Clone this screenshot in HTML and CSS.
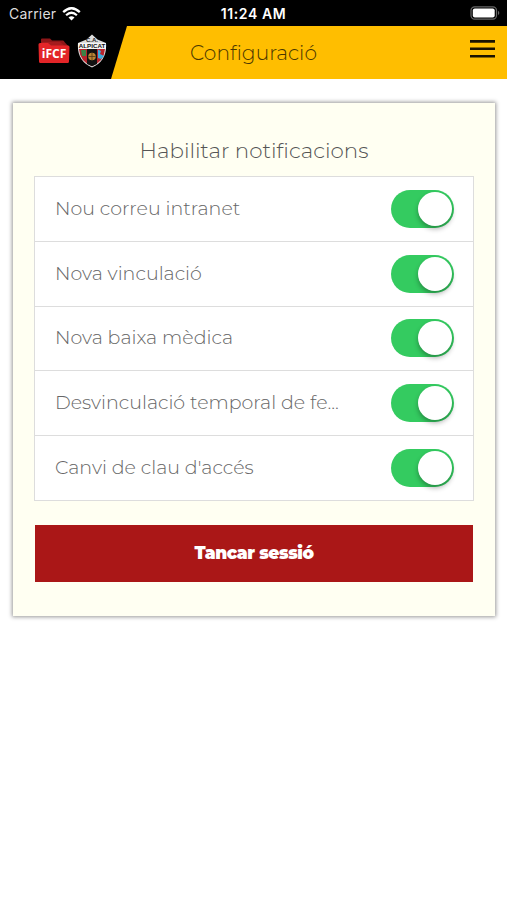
FILE: index.html
```html
<!DOCTYPE html>
<html lang="ca">
<head>
  <meta charset="UTF-8">
  <meta name="viewport" content="width=device-width, initial-scale=1.0">
  <title>Configuració</title>
  <link rel="stylesheet" href="styles.css">
</head>
<body>
  <div class="status-bar">
    <div class="carrier">
      <span>Carrier</span>
      <svg class="wifi" width="19" height="14" viewBox="0 0 19 14">
        <path d="M1.2 5.2 Q9.5 -2.8 17.8 5.2" fill="none" stroke="#fff" stroke-width="2.3"/>
        <path d="M4.1 8.3 Q9.5 3.2 14.9 8.3" fill="none" stroke="#fff" stroke-width="2.2"/>
        <path d="M6.5 10.5 Q9.5 8 12.5 10.5 L9.5 13.6 Z" fill="#fff"/>
      </svg>
    </div>
    <div class="clock">11:24 AM</div>
    <div class="battery">
      <svg width="31" height="14" viewBox="0 0 31 14">
        <rect x="1" y="0.8" width="25.5" height="12.4" rx="3.6" fill="none" stroke="#666" stroke-width="1.2"/>
        <rect x="2.8" y="2.6" width="21.9" height="8.8" rx="2" fill="#fff"/>
        <path d="M28 4.8 Q30.6 7 28 9.2 Z" fill="#666"/>
      </svg>
    </div>
  </div>

  <header class="navbar">
    <div class="logos">
      <svg width="32" height="26" viewBox="0 0 32 26">
        <path d="M3 9 V1.5 Q3 0.5 4 0.5 H12 L14 2.5 H25 Q26 2.5 26.5 4 L31 9 Z" fill="#8e1618"/>
        <path d="M4 4 H22 L27 8 H4 Z" fill="#a51b1d"/>
        <path d="M0.5 6.5 Q0.5 5 2 5 H10 L13 7.5 H30 Q31.5 7.5 31.5 9 L31 23.5 Q31 25 29.5 25 H2.5 Q1 25 1 23.5 Z" fill="#e32528"/>
        <text class="ifcf" x="16" y="20.2" text-anchor="middle">iFCF</text>
      </svg>
      <svg width="30" height="34" viewBox="0 0 30 34">
        <path d="M15 0.5 L20.5 5.5 L29 9 Q30.5 27 15 33.5 Q-0.5 27 1 9 L9.5 5.5 Z" fill="#ddd"/>
        <path d="M2 15 H28 Q27 27.5 15 32.3 Q3 27.5 2 15 Z" fill="#b8232c"/>
        <path d="M10 15 H20 V30 L15 32.3 L10 30 Z" fill="#111"/>
        <path d="M4 16 H9 V22 H5 Z" fill="#3c8245"/>
        <path d="M21 15.5 L24 17 L23 20 L27 22 L24 25 L21 24 Z" fill="#3badde"/>
        <circle cx="15" cy="22.5" r="3.8" fill="#b98432"/>
        <path d="M15 18.8 V26.2 M11.3 22.5 H18.7" stroke="#513716" stroke-width="0.8"/>
        <path d="M1 9 H29 V15 H1 Z" fill="#f5f5f5"/>
        <text class="crest-top" x="15" y="8.2" text-anchor="middle">C.A.</text>
        <text class="crest-name" x="15" y="14.3" text-anchor="middle">ALPICAT</text>
      </svg>
    </div>
    <h1>Configuració</h1>
    <svg class="menu" width="25" height="20" viewBox="0 0 25 20">
      <path d="M0 2.4 H25 M0 9.8 H25 M0 17.2 H25" stroke="#1b1300" stroke-width="2.6"/>
    </svg>
  </header>

  <main class="card">
    <h2>Habilitar notificacions</h2>
    <ul class="options">
      <li><span class="label">Nou correu intranet</span><span class="switch"></span></li>
      <li><span class="label">Nova vinculació</span><span class="switch"></span></li>
      <li><span class="label">Nova baixa mèdica</span><span class="switch"></span></li>
      <li><span class="label">Desvinculació temporal de fe...</span><span class="switch"></span></li>
      <li><span class="label">Canvi de clau d'accés</span><span class="switch"></span></li>
    </ul>
    <button class="logout">Tancar sessió</button>
  </main>
</body>
</html>
```

FILE: styles.css
```css
* {
  box-sizing: border-box;
}
body {
  margin: 0;
  min-height: 100vh;
  background: #fff;
  font-family: Montserrat, Inter, sans-serif;
  font-weight: 300;
}
.status-bar {
  display: grid;
  grid-template-columns: 1fr auto 1fr;
  align-items: center;
  height: 26px;
  padding: 1px 6px 0 9px;
  background: #000;
  color: #fff;
  font-family: Inter, sans-serif;
  font-size: 14px;
}
.carrier {
  display: flex;
  align-items: center;
  gap: 6px;
  font-weight: 400;
  color: #ddd;
  letter-spacing: 0.2px;
}
.clock {
  margin-left: -3px;
  font-weight: 600;
  letter-spacing: 0.6px;
}
.battery {
  display: flex;
  justify-content: flex-end;
}
.battery svg {
  margin-top: -1px;
}
.navbar {
  display: grid;
  grid-template-columns: 127px 1fr 127px;
  align-items: center;
  height: 53px;
  background: #ffbe00;
}
.logos {
  display: flex;
  align-items: center;
  gap: 7px;
  height: 53px;
  padding: 0 0 3px 38px;
  background: #000;
  clip-path: polygon(0 0, 100% 0, 111px 100%, 0 100%);
}
.ifcf {
  font: 700 12px "Open Sans", sans-serif;
  fill: #fff;
}
.crest-top {
  font: 700 6px "Liberation Sans", sans-serif;
  fill: #222;
}
.crest-name {
  font: 700 6.2px "Liberation Sans", sans-serif;
  fill: #111;
}
h1 {
  margin: 0;
  color: #4a3700;
  font-size: 20.2px;
  font-weight: 300;
  text-align: center;
}
.menu {
  justify-self: end;
  margin: 0 12px 7px 0;
}
.card {
  width: 482px;
  height: 513px;
  margin: 24px 0 0 13px;
  padding: 33px 21px 0 21px;
  background: #fffff2;
  box-shadow: 0 0 4px 1px #999;
}
h2 {
  margin: 0 0 11px;
  color: #555;
  font-size: 21.4px;
  font-weight: 300;
  line-height: 29px;
  text-align: center;
}
.options {
  margin: 0;
  padding: 0;
  list-style: none;
  background: #fff;
  border: 1px solid #ddd;
  border-bottom: none;
}
.options li {
  display: flex;
  align-items: center;
  justify-content: space-between;
  height: 64.8px;
  padding: 0 19px 0 20px;
  border-bottom: 1px solid #ddd;
  color: #666;
  font-size: 19px;
}
.label {
  margin-top: -1px;
  white-space: nowrap;
}
.switch {
  display: flex;
  align-items: center;
  justify-content: flex-end;
  width: 63px;
  height: 38px;
  padding-right: 2px;
  border-radius: 19px;
  background: #34cb60;
}
.switch::after {
  content: "";
  width: 34px;
  height: 34px;
  border-radius: 50%;
  background: #fff;
  box-shadow: 0 3px 5px rgba(0, 0, 0, 0.3);
}
.logout {
  display: block;
  width: 438px;
  height: 57px;
  margin: 24px 0 0 1px;
  padding: 0;
  border: none;
  background: #aa1717;
  color: #fff;
  font-family: Montserrat, Inter, sans-serif;
  font-size: 17px;
  font-weight: 900;
  letter-spacing: -0.45px;
}
```
